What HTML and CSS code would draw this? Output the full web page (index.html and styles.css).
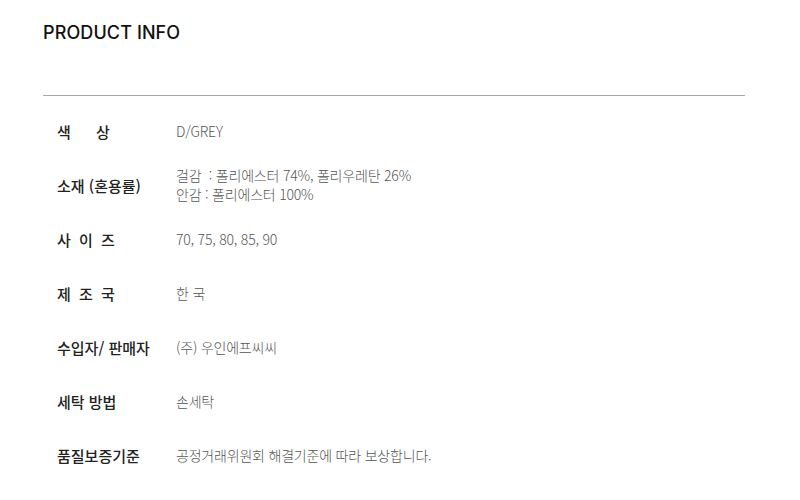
FILE: index.html
```html
<!DOCTYPE html>
<html lang="ko">
<head>
<meta charset="utf-8">
<title>Product Info</title>
<link rel="stylesheet" href="styles.css">
</head>
<body>
<section class="info">
  <h2 class="title">PRODUCT INFO</h2>
  <div class="table">
    <div class="row"><div class="label wide">색 상</div><div class="value">D/GREY</div></div>
    <div class="row"><div class="label">소재 (혼용률)</div><div class="value"><p class="line">걸감 &nbsp;: 폴리에스터 74%, 폴리우레탄 26%</p><p class="line">안감 : 폴리에스터 100%</p></div></div>
    <div class="row"><div class="label spaced">사 이 즈</div><div class="value">70, 75, 80, 85, 90</div></div>
    <div class="row"><div class="label spaced">제 조 국</div><div class="value">한 국</div></div>
    <div class="row"><div class="label">수입자/ 판매자</div><div class="value">(주) 우인에프씨씨</div></div>
    <div class="row"><div class="label">세탁 방법</div><div class="value">손세탁</div></div>
    <div class="row"><div class="label">품질보증기준</div><div class="value">공정거래위원회 해결기준에 따라 보상합니다.</div></div>
  </div>
</section>
</body>
</html>
```
FILE: styles.css
```css
html, body {
  margin: 0;
  padding: 0;
  background: #fff;
}
.info {
  width: 702px;
  margin-left: 43px;
  padding-top: 22px;
}
.title {
  margin: 0;
  font-family: Inter, "Noto Sans", sans-serif;
  font-weight: 500;
  font-size: 18px;
  line-height: 22px;
  color: #111;
  letter-spacing: 0.1px;
  padding-bottom: 51px;
  border-bottom: 1px solid #aaa;
}
.table {
  display: flex;
  flex-direction: column;
  padding-top: 8px;
}
.row {
  display: flex;
  align-items: center;
  height: 54px;
  padding-left: 14px;
}
.label {
  width: 119px;
  flex: none;
  font-family: "Noto Sans CJK KR", sans-serif;
  font-weight: 500;
  font-size: 15px;
  color: #222;
  white-space: pre;
}
.label.wide { word-spacing: 21px; }
.label.spaced { word-spacing: 4px; }
.value {
  font-family: "Noto Sans CJK KR", sans-serif;
  font-weight: 300;
  font-size: 14px;
  line-height: 19px;
  color: #555;
  letter-spacing: -0.2px;
}
.line {
  margin: 0;
}
```
